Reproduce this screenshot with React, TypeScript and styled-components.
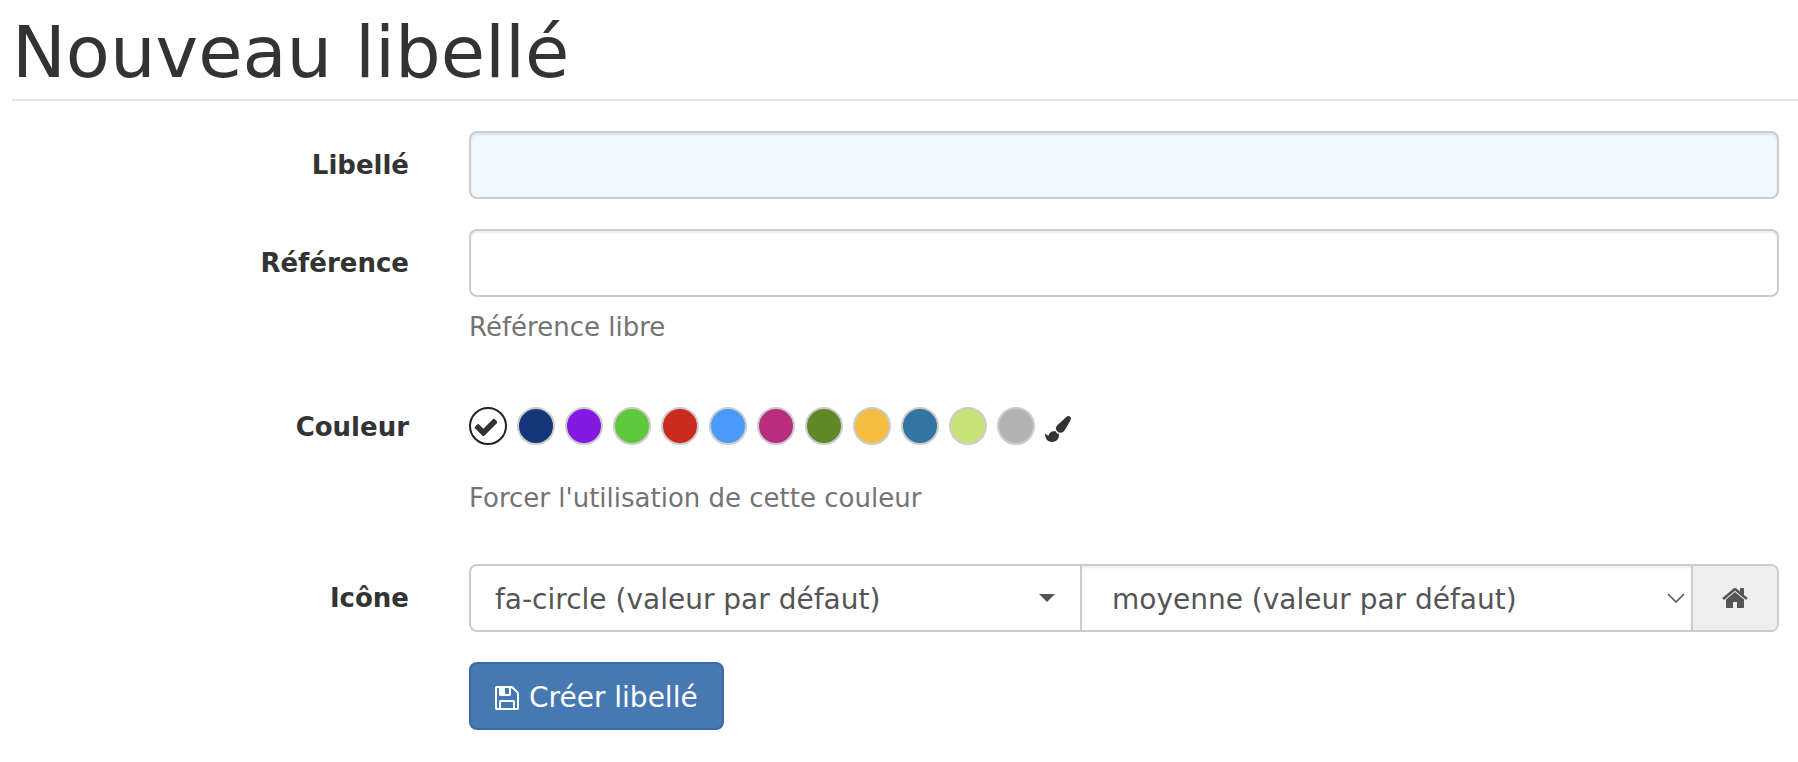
import React, { useState } from "react";
import styled, { createGlobalStyle } from "styled-components";

const GlobalStyle = createGlobalStyle`
  *, *::before, *::after { box-sizing: border-box; }
  body {
    margin: 0;
    background: #fff;
    color: #333;
    font-family: Verdana, "DejaVu Sans", sans-serif;
    font-size: 26px;
    line-height: 36px;
  }
`;

const Page = styled.main`
  padding: 12px 0 32px 12px;
`;

const Title = styled.h1`
  margin: 0 0 30px;
  padding-bottom: 7px;
  border-bottom: 2px solid #e5e5e5;
  font-size: 72px;
  font-weight: 400;
  line-height: 80px;
`;

const Form = styled.form`
  display: flex;
  flex-direction: column;
  gap: 30px;
  padding-right: 19px;
`;

const Row = styled.div`
  display: grid;
  grid-template-columns: 397px minmax(0, 1fr);
  column-gap: 60px;

  @media (max-width: 900px) {
    grid-template-columns: minmax(0, 1fr);
  }
`;

const Label = styled.label`
  padding-top: 16px;
  font-weight: 700;
  text-align: right;

  @media (max-width: 900px) {
    text-align: left;
  }
`;

const Field = styled.div`
  grid-column: -2 / -1;
`;

const TextInput = styled.input<{ $required?: boolean }>`
  display: block;
  width: 100%;
  height: 68px;
  padding: 12px 24px;
  border: 2px solid #ccc;
  border-radius: 8px;
  background: ${(p) => (p.$required ? "#f0f8ff" : "#fff")};
  box-shadow: inset 0 2px 2px rgba(0, 0, 0, 0.075);
  color: #555;
  font: inherit;
  font-size: 28px;
`;

const Help = styled.p`
  margin: 0;
  padding: 12px 0 18px;
  color: #737373;
`;

const Swatches = styled.div`
  display: flex;
  align-items: center;
  flex-wrap: wrap;
  gap: 10px;
  padding: 14px 0 23px;
`;

const Swatch = styled.label<{ $color: string; $checked: boolean }>`
  display: flex;
  align-items: center;
  width: 38px;
  height: 38px;
  padding: 1px 0 0 2px;
  border: 2px solid ${(p) => (p.$checked ? "#222" : "#ccc")};
  border-radius: 50%;
  background: ${(p) => p.$color};
  cursor: pointer;
`;

const SwatchRadio = styled.input`
  position: absolute;
  width: 1px;
  height: 1px;
  margin: 0;
  opacity: 0;
`;

const BrushButton = styled.button`
  display: flex;
  padding: 6px 0 0;
  border: 0;
  background: none;
  color: #333;
  cursor: pointer;
`;

const InputGroup = styled.div`
  display: flex;
  height: 68px;
  border: 2px solid #ccc;
  border-radius: 8px;
  overflow: hidden;
`;

const SelectCell = styled.div<{ $inset?: boolean }>`
  position: relative;
  flex: 1 1 0;
  min-width: 0;
  border-right: 2px solid #ccc;
  box-shadow: ${(p) => (p.$inset ? "inset 0 2px 2px rgba(0, 0, 0, 0.075)" : "none")};
`;

const Select = styled.select<{ $indent: number }>`
  display: block;
  width: 100%;
  height: 100%;
  padding: 3px 56px 0 ${(p) => p.$indent}px;
  border: 0;
  appearance: none;
  background: transparent;
  color: #555;
  font: inherit;
  font-size: 28px;
`;

const Arrow = styled.svg<{ $right: number }>`
  position: absolute;
  top: 50%;
  right: ${(p) => p.$right}px;
  transform: translateY(-50%);
  color: #555;
  pointer-events: none;
`;

const Addon = styled.span`
  display: flex;
  align-items: center;
  justify-content: center;
  width: 84px;
  background: #eee;
  color: #555;
`;

const SubmitButton = styled.button`
  display: inline-flex;
  align-items: center;
  gap: 10px;
  height: 68px;
  padding: 3px 24px 0;
  border: 2px solid #3d6ca3;
  border-radius: 8px;
  background: #4678b2;
  color: #fff;
  font: inherit;
  font-size: 28px;
  white-space: nowrap;
  cursor: pointer;
`;

const icons = {
  check:
    "M1671 566q0 40-28 68l-724 724-136 136q-28 28-68 28t-68-28l-136-136-362-362q-28-28-28-68t28-68l136-136q28-28 68-28t68 28l294 295 656-657q28-28 68-28t68 28l136 136q28 28 28 68z",
  home:
    "M1472 992v480q0 26-19 45t-45 19h-384v-384h-256v384h-384q-26 0-45-19t-19-45v-480q0-1 .5-3t.5-3l575-474 575 474q1 2 1 6zm223-69l-62 74q-8 9-21 11h-3q-13 0-21-7l-692-577-692 577q-12 8-24 7-13-2-21-11l-62-74q-8-10-7-23.5t11-21.5l719-599q32-26 76-26t76 26l244 204v-195q0-14 9-23t23-9h192q14 0 23 9t9 23v408l219 182q10 8 11 21.5t-7 23.5z",
  save:
    "M512 1536h768v-384h-768v384zm896 0h128v-896q0-14-10-38.5t-20-34.5l-281-281q-10-10-34-20t-39-10v416q0 40-28 68t-68 28h-576q-40 0-68-28t-28-68v-416h-128v1280h128v-416q0-40 28-68t68-28h832q40 0 68 28t28 68v416zm-384-928v-320q0-13-9.5-22.5t-22.5-9.5h-192q-13 0-22.5 9.5t-9.5 22.5v320q0 13 9.5 22.5t22.5 9.5h192q13 0 22.5-9.5t9.5-22.5zm640 32v928q0 40-28 68t-68 28h-1344q-40 0-68-28t-28-68v-1344q0-40 28-68t68-28h928q40 0 88 20t76 48l280 280q28 28 48 76t20 88z",
  brush:
    "M1615 0q70 0 122.5 46.5t52.5 116.5q0 63-45 151-332 629-465 752-97 91-218 91-126 0-216.5-92.5t-90.5-219.5q0-128 92-212l638-579q59-54 130-54zm-909 1034q39 76 106.5 130t150.5 76l1 71q4 213-129.5 347t-348.5 134q-123 0-218-46.5t-152.5-127.5-86.5-183-29-220q7 5 41 30t62 44.5 59 36.5 46 17q41 0 55-37 25-66 57.5-112.5t69.5-76 88-47.5 103-25.5 125-10.5z",
};

function Icon({ name, size, left = 0 }: { name: keyof typeof icons; size: number; left?: number }) {
  const viewWidth = 1792 - 2 * left;
  return (
    <svg
      width={Math.round((size * viewWidth) / 1792)}
      height={size}
      viewBox={`${left} 0 ${viewWidth} 1792`}
      fill="currentColor"
      aria-hidden="true"
    >
      <path d={icons[name]} />
    </svg>
  );
}

const colors = [
  { name: "Aucune", value: "#ffffff" },
  { name: "Bleu marine", value: "#14377a" },
  { name: "Violet", value: "#8419e4" },
  { name: "Vert", value: "#5eca3b" },
  { name: "Rouge", value: "#c92b1d" },
  { name: "Bleu clair", value: "#4a9bf9" },
  { name: "Magenta", value: "#b92d7f" },
  { name: "Olive", value: "#628927" },
  { name: "Orange", value: "#f5bd42" },
  { name: "Bleu canard", value: "#3375a0" },
  { name: "Vert clair", value: "#c6e377" },
  { name: "Gris", value: "#b3b3b3" },
];

export default function App() {
  const [color, setColor] = useState(colors[0].value);

  return (
    <>
      <GlobalStyle />
      <Page>
        <Title>Nouveau libellé</Title>
        <Form onSubmit={(e) => e.preventDefault()}>
          <Row>
            <Label htmlFor="libelle">Libellé</Label>
            <Field>
              <TextInput id="libelle" type="text" $required />
            </Field>
          </Row>
          <Row>
            <Label htmlFor="reference">Référence</Label>
            <Field>
              <TextInput id="reference" type="text" aria-describedby="reference-help" />
              <Help id="reference-help">Référence libre</Help>
            </Field>
          </Row>
          <Row>
            <Label as="span" id="couleur">Couleur</Label>
            <Field>
              <Swatches role="radiogroup" aria-labelledby="couleur">
                {colors.map((c) => (
                  <Swatch key={c.value} $color={c.value} $checked={c.value === color}>
                    <SwatchRadio
                      type="radio"
                      name="couleur"
                      aria-label={c.name}
                      checked={c.value === color}
                      onChange={() => setColor(c.value)}
                    />
                    {c.value === color && <Icon name="check" size={26} />}
                  </Swatch>
                ))}
                <BrushButton type="button" aria-label="Autre couleur">
                  <Icon name="brush" size={26} />
                </BrushButton>
              </Swatches>
              <Help>Forcer l'utilisation de cette couleur</Help>
            </Field>
          </Row>
          <Row>
            <Label htmlFor="icone">Icône</Label>
            <Field>
              <InputGroup>
                <SelectCell>
                  <Select id="icone" $indent={24}>
                    <option>fa-circle (valeur par défaut)</option>
                  </Select>
                  <Arrow $right={25} width="16" height="8" viewBox="0 0 16 8" fill="currentColor">
                    <path d="M0 0h16L8 8z" />
                  </Arrow>
                </SelectCell>
                <SelectCell $inset>
                  <Select aria-label="Taille" $indent={30}>
                    <option>moyenne (valeur par défaut)</option>
                  </Select>
                  <Arrow $right={6} width="18" height="10" viewBox="0 0 18 10" fill="none" stroke="currentColor" strokeWidth="1.6">
                    <path d="M1 1l8 8 8-8" />
                  </Arrow>
                </SelectCell>
                <Addon>
                  <Icon name="home" size={28} />
                </Addon>
              </InputGroup>
            </Field>
          </Row>
          <Row>
            <Field>
              <SubmitButton type="submit">
                <Icon name="save" size={28} left={128} />
                Créer libellé
              </SubmitButton>
            </Field>
          </Row>
        </Form>
      </Page>
    </>
  );
}
